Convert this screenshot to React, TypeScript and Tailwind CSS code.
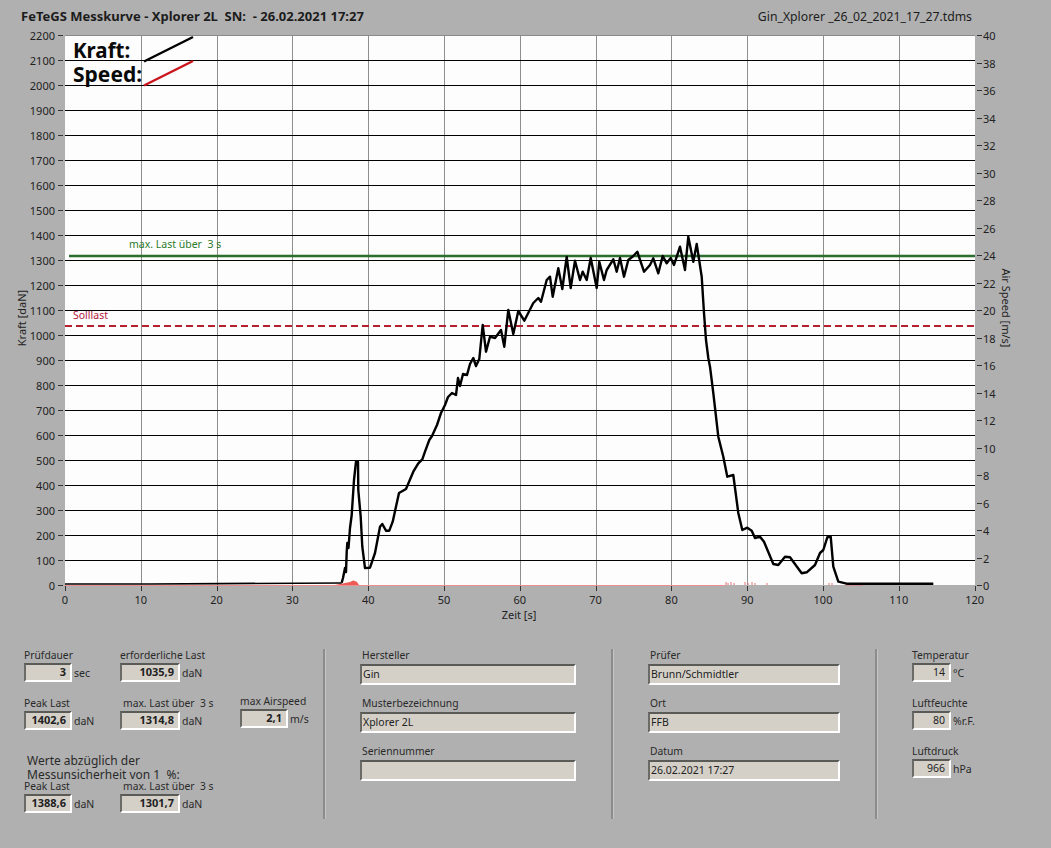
const FONT = 'font-["Noto_Sans",sans-serif]';

// kraft curve in pixel coords of the plot
const kraft: [number, number][] = [
  [341.7, 582.7], [343, 578], [345, 568], [346, 572], [346.7, 552], [347.3, 543], [348.5, 548], [350, 528], [351.7, 515], [354, 480], [356, 461.7], [358, 461.7],
  [358.3, 490], [360.7, 516.7], [362.3, 546.7], [365, 568], [370, 567.7], [375, 553], [380, 526.7], [382.3, 524], [386, 530.7], [389.3, 530.7],
  [392.7, 521.7], [399, 493], [406, 489], [413.3, 471.7], [418.3, 463.3], [422.3, 459.3], [425, 451.7], [429.3, 440], [432, 436], [437, 425], [441, 413],
  [445, 405], [448, 397], [452, 393], [456, 395], [458, 378], [460, 386], [463, 374], [467, 375], [470, 364], [473.3, 358], [476, 366], [479.3, 359],
  [482.7, 325], [486, 351.7], [490, 336.7], [495, 338], [501, 330], [504.3, 346.7], [508.3, 310], [513.3, 334], [518.3, 311], [524.3, 320.7],
  [533.3, 303], [538.3, 298], [541, 301.7], [546.7, 280], [550, 276.7], [552.7, 296.7], [558.3, 268.3], [562.3, 289], [566.7, 257], [570.7, 288],
  [575, 260.7], [580, 280], [582.7, 271.7], [586.7, 280], [590.7, 258], [596.7, 288], [599.3, 261.7], [604, 280], [606.7, 270], [613.3, 259.3],
  [616.7, 271.7], [620, 258], [624, 276.7], [628.3, 260], [633.3, 256], [637.3, 251.7], [644, 271.7], [650, 265], [653.3, 258.3], [658.3, 273.3],
  [662.7, 256], [666.7, 263.3], [670.7, 258], [674, 265], [680, 246.7], [685, 270], [688.3, 236.7], [693.3, 261.7], [696.7, 244], [701.7, 276.7],
  [704, 313], [706, 340], [708.3, 358], [710, 366.7], [713.3, 393], [718.3, 436.7], [723.3, 456.7], [727.3, 476.7], [733.3, 475], [738.3, 513],
  [742.3, 530], [747.3, 527.7], [751.7, 530.7], [755, 538], [760, 536.7], [764, 541.7], [773.3, 564], [778.3, 565], [785, 556.7], [790, 557.3],
  [801.7, 573.3], [806.7, 572.3], [815, 565], [820, 553], [823.3, 550], [827.3, 537.3], [830.7, 536.7], [833.3, 566.7], [838.3, 581.7], [846.7, 583.7],
  [933.3, 583.7],
];
const kraftPts = kraft.map((p) => p.join(',')).join(' ');

const xTicks = Array.from({ length: 13 }, (_, i) => i * 10);
const yTicks = Array.from({ length: 23 }, (_, i) => i * 100);
const speedTicks = Array.from({ length: 21 }, (_, i) => i * 2);
const px = (s: number) => 65 + s * 7.58;
const py = (k: number) => Math.round(585 - k * 0.25) + 0.5;

function Chart() {
  return (
    <svg width={1051} height={602} viewBox="0 28 1051 602" className="block">
      <rect x={65} y={35} width={910} height={550} fill="#fdfdfd" />
      <line x1={65} y1={35.5} x2={975} y2={35.5} stroke="#8a8a8a" />
      {xTicks.slice(1, 12).map((t) => (
        <line key={t} x1={Math.round(px(t)) + 0.5} y1={35} x2={Math.round(px(t)) + 0.5} y2={585} stroke="#8e8e8e" />
      ))}
      {yTicks.slice(1, 22).map((t) => (
        <line key={t} x1={65} y1={py(t)} x2={975} y2={py(t)} stroke="#000" />
      ))}
      {/* left and bottom axis */}
      <g fontSize={11} fill="#222" stroke="none">
        {yTicks.map((t) => (
          <g key={t}>
            <line x1={58} y1={py(t)} x2={63} y2={py(t)} stroke="#333" />
            <text x={55} y={py(t) + 4} textAnchor="end">{t}</text>
          </g>
        ))}
        {xTicks.map((t) => (
          <g key={t}>
            <line x1={Math.round(px(t)) + 0.5} y1={586} x2={Math.round(px(t)) + 0.5} y2={591} stroke="#333" />
            <text x={px(t)} y={604} textAnchor="middle">{t}</text>
          </g>
        ))}
        {speedTicks.map((t) => (
          <g key={t}>
            <line x1={977} y1={py(t * 55)} x2={982} y2={py(t * 55)} stroke="#333" />
            <text x={983} y={py(t * 55) + 4}>{t}</text>
          </g>
        ))}
        <text x={519} y={619} textAnchor="middle">Zeit [s]</text>
        <text transform="translate(26 318) rotate(-90)" textAnchor="middle">Kraft [daN]</text>
        <text transform="translate(1002 308) rotate(90)" textAnchor="middle">Air Speed [m/s]</text>
      </g>
      {/* limit lines */}
      <line x1={69} y1={256} x2={975} y2={256} stroke="#2c6e2c" strokeWidth={2.5} />
      <line x1={65} y1={326} x2={975} y2={326} stroke="#b3202e" strokeWidth={2} strokeDasharray="7 4" />
      <text x={129} y={248} fontSize={10.5} fill="#2c7a2c" className="whitespace-pre">max. Last über  3 s</text>
      <text x={73} y={319} fontSize={10.5} fill="#b3203e">Solllast</text>
      {/* speed */}
      <line x1={65} y1={585.5} x2={725} y2={585.5} stroke="#ee8f8f" />
      <polygon points="335,585 345,583 350,582 353,580.5 355,581 357,582 359,585" fill="#ee5a55" />
      <path d="M726 585v-3M728 585v-2M731 585v-3M734 585v-2M745 585v-3M748 585v-2M752 585v-3M755 585v-2M767 585v-2M829 585v-2M832 585v-2M845 585h18M870 585v-1M900 585v-1" stroke="#e87070" />
      {/* kraft */}
      <polyline points="65,584 150,584 220,583.6 341.7,583" fill="none" stroke="#000" strokeWidth={1.6} />
      <polyline points={kraftPts} fill="none" stroke="#000" strokeWidth={2.4} strokeLinejoin="round" />
      {/* legend */}
      <text x={73} y={58} fontSize={20.5} fontWeight={700} fill="#0a0a0a">Kraft:</text>
      <text x={73} y={82} fontSize={21} fontWeight={700} fill="#0a0a0a">Speed:</text>
      <line x1={144} y1={61.5} x2={193} y2={37} stroke="#000" strokeWidth={2.5} />
      <line x1={144} y1={85.5} x2={193} y2={61} stroke="#c8171f" strokeWidth={2.5} />
    </svg>
  );
}

function Box({ value, className, bold }: { value?: string; className: string; bold?: boolean }) {
  return (
    <div
      className={`flex items-center bg-[#d4d0c8] border-t-2 border-l-2 border-t-[#5a5a56] border-l-[#6a6a66] border-b-2 border-r-2 border-b-white border-r-white text-[#222] ${bold ? 'font-bold text-[11px]' : 'text-[10.5px]'} ${className}`}
    >
      {value}
    </div>
  );
}

function NumField({ label, value, unit, boxW, bold = true, labelPl = '' }: { label: string; value: string; unit: string; boxW: string; bold?: boolean; labelPl?: string }) {
  return (
    <div className="flex flex-col">
      <div className={`h-[15px] leading-[15px] text-[10.3px] whitespace-pre ${labelPl}`}>{label}</div>
      <div className="flex items-center gap-[2px]">
        <Box value={value} bold={bold} className={`${boxW} h-[19px] justify-end pr-1`} />
        <span className="text-[10.5px] leading-[15px] mt-px">{unit}</span>
      </div>
    </div>
  );
}

function TextField({ label, value, w }: { label: string; value: string; w: string }) {
  return (
    <div className="flex flex-col">
      <div className="h-[15px] leading-[13px] text-[10.3px] pl-[2px]">{label}</div>
      <Box value={value} className={`${w} h-[21px] pl-px`} />
    </div>
  );
}

function Separator() {
  return <div className="w-[3px] h-[170px] mt-[19px] bg-[#8c8c8c] border-r border-r-[#c4c4c4] shrink-0" />;
}

function Panel() {
  return (
    <div className="flex h-[218px] text-[#2a2a2a]">
      {/* Prüfwerte */}
      <div className="w-[323px] pl-6 pt-[18px] shrink-0">
        <div className="flex flex-col gap-[14px]">
          <div className="flex">
            <div className="w-[96px]"><NumField label="Prüfdauer" value="3" unit="sec" boxW="w-12" /></div>
            <NumField label="erforderliche Last" value="1035,9" unit="daN" boxW="w-[60px]" />
          </div>
          <div className="flex">
            <div className="w-[96px]"><NumField label="Peak Last" value="1402,6" unit="daN" boxW="w-12" /></div>
            <div className="w-[120px]"><NumField label="max. Last über  3 s" labelPl="pl-[3px]" value="1314,8" unit="daN" boxW="w-[60px]" /></div>
            <div className="-mt-[2px]"><NumField label="max Airspeed" value="2,1" unit="m/s" boxW="w-12" /></div>
          </div>
        </div>
        <div className="mt-[24px] pl-[3px] text-[12px] leading-[14px]">
          <div>Werte abzüglich der</div>
          <div className="whitespace-pre">Messunsicherheit von 1  %:</div>
        </div>
        <div className="flex -mt-[3px]">
          <div className="w-[96px]"><NumField label="Peak Last" value="1388,6" unit="daN" boxW="w-12" /></div>
          <NumField label="max. Last über  3 s" labelPl="pl-[3px]" value="1301,7" unit="daN" boxW="w-[60px]" />
        </div>
      </div>
      <Separator />
      {/* Hersteller */}
      <div className="w-[285px] pl-[34px] pt-[19px] flex flex-col gap-[12px] shrink-0">
        <TextField label="Hersteller" value="Gin" w="w-[216px]" />
        <TextField label="Musterbezeichnung" value="Xplorer 2L" w="w-[216px]" />
        <TextField label="Seriennummer" value="" w="w-[216px]" />
      </div>
      <Separator />
      {/* Prüfer */}
      <div className="w-[261px] pl-[34px] pt-[19px] flex flex-col gap-[12px] shrink-0">
        <TextField label="Prüfer" value="Brunn/Schmidtler" w="w-[192px]" />
        <TextField label="Ort" value="FFB" w="w-[192px]" />
        <TextField label="Datum" value="26.02.2021 17:27" w="w-[192px]" />
      </div>
      <Separator />
      {/* Umgebung */}
      <div className="pl-[34px] pt-[18px] flex flex-col gap-[14px]">
        <NumField label="Temperatur" value="14" unit="°C" boxW="w-[39px]" bold={false} />
        <NumField label="Luftfeuchte" value="80" unit="%r.F." boxW="w-[39px]" bold={false} />
        <NumField label="Luftdruck" value="966" unit="hPa" boxW="w-[39px]" bold={false} />
      </div>
    </div>
  );
}

export default function App() {
  return (
    <div className={`w-[1051px] h-[848px] overflow-hidden bg-[#b0b0b0] ${FONT}`}>
      <div className="flex justify-between h-[28px] pl-[21px] pr-[79px] pt-[8px] leading-[16px] text-[#1c1c1c]">
        <span className="font-bold whitespace-pre text-[13px]">FeTeGS Messkurve - Xplorer 2L  SN:  - 26.02.2021 17:27</span>
        <span className="whitespace-pre text-[12.25px] pt-px">Gin_Xplorer _26_02_2021_17_27.tdms</span>
      </div>
      <Chart />
      <Panel />
    </div>
  );
}
